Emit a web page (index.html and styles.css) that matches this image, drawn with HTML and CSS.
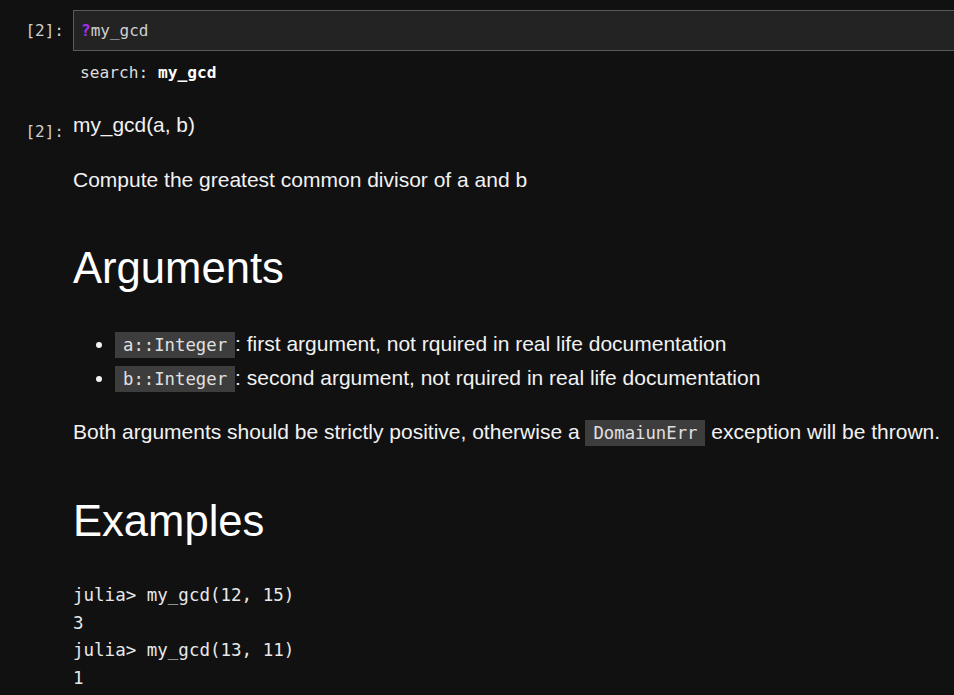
FILE: index.html
```html
<!DOCTYPE html>
<html>
<head>
<meta charset="utf-8">
<link rel="stylesheet" href="styles.css">
</head>
<body>
<div class="cell in-cell">
  <div class="prompt">[2]:</div>
  <div class="input-wrap">
    <div class="input-box"><span class="q">?</span>my_gcd</div>
    <div class="search">search: <b>my_gcd</b></div>
  </div>
</div>
<div class="cell out-cell">
  <div class="prompt out-prompt">[2]:</div>
  <div class="output">
    <p class="sig">my_gcd(a, b)</p>
    <p class="desc">Compute the greatest common divisor of a and b</p>
    <h1 class="h-args">Arguments</h1>
    <ul class="args">
      <li><code>a::Integer</code>: first argument, not rquired in real life documentation</li>
      <li><code>b::Integer</code>: second argument, not rquired in real life documentation</li>
    </ul>
    <p class="both">Both arguments should be strictly positive, otherwise a <code>DomaiunErr</code> exception will be thrown.</p>
    <h1 class="h-ex">Examples</h1>
    <pre class="example">julia&gt; my_gcd(12, 15)
3
julia&gt; my_gcd(13, 11)
1</pre>
  </div>
</div>
</body>
</html>
```
FILE: styles.css
```css
html, body {
  margin: 0;
  padding: 0;
  background: #111111;
  overflow: hidden;
}
body {
  font-family: "Liberation Sans", Arial, sans-serif;
  color: #eeeeee;
  height: 695px;
}
.cell {
  display: flex;
  align-items: flex-start;
}
.prompt {
  width: 64px;
  flex: none;
  margin-right: 9px;
  text-align: right;
  font-family: "DejaVu Sans Mono", monospace;
  font-size: 16px;
  color: #cfcfcf;
}
.in-cell {
  padding-top: 10px;
}
.in-cell .prompt {
  line-height: 41px;
}
.input-wrap {
  flex: 1;
  margin-right: -20px;
}
.input-box {
  height: 39px;
  line-height: 39px;
  border: 1px solid #5a5a5a;
  background: #232323;
  padding-left: 7px;
  font-family: "DejaVu Sans Mono", monospace;
  font-size: 16px;
  color: #d0d0d0;
}
.q {
  color: #a42fe8;
  font-weight: bold;
}
.search {
  margin-top: 10px;
  padding-left: 7px;
  line-height: 24px;
  font-family: "DejaVu Sans Mono", monospace;
  font-size: 16.2px;
  color: #dddddd;
}
.search b {
  color: #ffffff;
}
.out-cell {
  margin-top: 28px;
}
.out-prompt {
  padding-top: 7px;
  line-height: 24px;
}
.output {
  flex: 1;
}
.output p {
  margin: 0;
  font-size: 21px;
  line-height: 24px;
  color: #f2f2f2;
}
.output .sig {
  font-size: 20.9px;
}
.output .desc {
  margin-top: 31px;
}
.output h1 {
  margin: 0;
  font-weight: normal;
  font-size: 43.6px;
  line-height: 52px;
  color: #ffffff;
}
.h-args {
  margin-top: 50px !important;
}
.args {
  margin: 33px 0 0 0;
  padding-left: 42px;
  list-style: disc;
  font-size: 21px;
  color: #f2f2f2;
}
.args li {
  line-height: 34px;
  height: 34px;
}
code {
  font-family: "DejaVu Sans Mono", monospace;
  font-size: 17.3px;
  background: #3d3d3d;
  color: #e0e0e0;
  padding: 3px 8px 3px 8px;
}
.output .both {
  margin-top: 25px;
}
.h-ex {
  margin-top: 50px !important;
}
.example {
  margin: 35px 0 0 0;
  font-family: "DejaVu Sans Mono", monospace;
  font-size: 17.5px;
  line-height: 27.7px;
  color: #e8e8e8;
}
```
